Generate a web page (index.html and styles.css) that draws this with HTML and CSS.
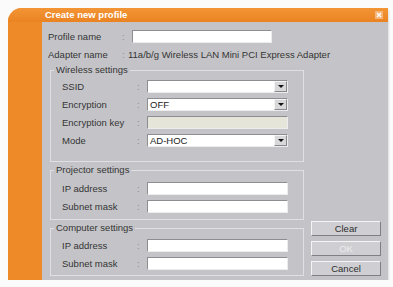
FILE: index.html
```html
<!DOCTYPE html>
<html lang="en">
<head>
<meta charset="UTF-8">
<meta name="viewport" content="width=device-width, initial-scale=1.0">
<title>Create new profile</title>
<link rel="stylesheet" href="styles.css">
</head>
<body>

<div class="window">
  <div class="titlebar">
    <span class="title">Create new profile</span>
    <span class="close">
      <svg width="8" height="8" viewBox="0 0 8 8">
        <rect x="0" y="0" width="8" height="8" fill="#f6b477"/>
        <path d="M2 2 L6 6 M6 2 L2 6" stroke="#fff" stroke-width="1.4"/>
      </svg>
    </span>
  </div>
  <div class="frame">
    <div class="panel">
      <div class="row">
        <label class="top-label" for="profile">Profile name</label>
        <span class="colon">:</span>
        <input class="field wide" type="text" id="profile">
      </div>
      <div class="row">
        <span class="top-label">Adapter name</span>
        <span class="colon narrow">:</span>
        <span class="value">11a/b/g Wireless LAN Mini PCI Express Adapter</span>
      </div>

      <div class="main">
        <div class="groups">
          <fieldset class="group wireless">
            <legend>Wireless settings</legend>
            <div class="fields">
              <div class="row">
                <span class="group-label">SSID</span>
                <span class="colon">:</span>
                <div class="field select"><span class="text"></span><span class="arrow"></span></div>
              </div>
              <div class="row">
                <span class="group-label">Encryption</span>
                <span class="colon">:</span>
                <div class="field select"><span class="text">OFF</span><span class="arrow"></span></div>
              </div>
              <div class="row">
                <span class="group-label">Encryption key</span>
                <span class="colon">:</span>
                <input class="field disabled" type="text" disabled>
              </div>
              <div class="row">
                <span class="group-label">Mode</span>
                <span class="colon">:</span>
                <div class="field select"><span class="text">AD-HOC</span><span class="arrow"></span></div>
              </div>
            </div>
          </fieldset>

          <fieldset class="group projector">
            <legend>Projector settings</legend>
            <div class="fields">
              <div class="row">
                <span class="group-label">IP address</span>
                <span class="colon">:</span>
                <input class="field" type="text">
              </div>
              <div class="row">
                <span class="group-label">Subnet mask</span>
                <span class="colon">:</span>
                <input class="field" type="text">
              </div>
            </div>
          </fieldset>

          <fieldset class="group computer">
            <legend>Computer settings</legend>
            <div class="fields">
              <div class="row">
                <span class="group-label">IP address</span>
                <span class="colon">:</span>
                <input class="field" type="text">
              </div>
              <div class="row">
                <span class="group-label">Subnet mask</span>
                <span class="colon">:</span>
                <input class="field" type="text">
              </div>
            </div>
          </fieldset>
        </div>

        <div class="buttons">
          <button type="button">Clear</button>
          <button type="button" class="off" disabled>OK</button>
          <button type="button">Cancel</button>
        </div>
      </div>
    </div>
  </div>
</div>

</body>
</html>
```

FILE: styles.css
```css
/* Create new profile dialog */
body {
  margin: 0;
  background-color: #fbfbfb;
  font-family: "Liberation Sans", Arial, sans-serif;
  font-size: 9.5px;
  color: #343434;
}
.window {
  margin: 8px 0 0 8px;
  width: 380px;
  background-color: #ef8a28;
  border-top-left-radius: 14px;
  box-shadow: 1px 2px 2px rgba(0, 0, 0, 0.12);
}
.titlebar {
  height: 14px;
  display: flex;
  align-items: center;
  justify-content: space-between;
  padding: 0 5px 0 37px;
  background: linear-gradient(#f39535, #ea8322);
  border-top-left-radius: 14px;
}
.title {
  color: #fff;
  font-weight: bold;
  line-height: 14px;
}
.close {
  display: flex;
  width: 8px;
  height: 8px;
}
.frame {
  display: flex;
  padding-left: 34px;
}
.panel {
  flex: 1;
  background-color: #c4c4c8;
  padding: 8px 0 4px 6px;
}
.row {
  display: flex;
  align-items: center;
  height: 13px;
}
.panel > .row + .row {
  margin-top: 5px;
}
.top-label {
  width: 74px;
}
.colon {
  width: 10px;
  color: #8c8c8c;
}
.colon.narrow {
  width: 6px;
}
.field {
  box-sizing: border-box;
  width: 141px;
  height: 13px;
  margin: 0;
  padding: 0 2px;
  background-color: #fff;
  border: 1px solid;
  border-color: #8e8e92 #ececee #ececee #8e8e92;
  font: inherit;
  color: #222;
  display: flex;
  align-items: center;
  outline: none;
}
.field.wide {
  width: 140px;
}
.field.disabled {
  background-color: #e5e5da;
}
.select {
  padding-right: 0;
}
.select .arrow {
  box-sizing: border-box;
  margin-left: auto;
  width: 13px;
  height: 11px;
  background-color: #d8d8da;
  border: 1px solid;
  border-color: #f4f4f4 #8a8a8e #8a8a8e #f4f4f4;
  display: flex;
  align-items: center;
  justify-content: center;
}
.select .arrow::after {
  content: "";
  border-left: 3px solid transparent;
  border-right: 3px solid transparent;
  border-top: 3px solid #111;
}
.main {
  display: flex;
  align-items: flex-end;
  margin: 3px 0 0 2px;
}
.groups {
  width: 254px;
}
.group {
  margin: 0;
  min-width: 0;
  padding: 4px 0 14px 3px;
  border: 1px solid #e0e0e4;
}
.group + .group {
  margin-top: 2px;
}
.group legend {
  padding: 0 2px;
  line-height: 12px;
}
.projector {
  padding: 6px 0 6px 3px;
}
.computer {
  padding: 5px 0 5px 3px;
}
.fields {
  display: flex;
  flex-direction: column;
  gap: 5px;
  margin-left: 8px;
}
.group-label {
  width: 75px;
}
.buttons {
  display: flex;
  flex-direction: column;
  gap: 5px;
  margin-left: 7px;
}
.buttons button {
  width: 70px;
  height: 15px;
  padding: 0;
  background-color: #cfcfd3;
  border: 1px solid;
  border-color: #f4f4f4 #808084 #808084 #f4f4f4;
  font: inherit;
  color: #2c2c2c;
}
.buttons button.off {
  color: #ececec;
}
```
